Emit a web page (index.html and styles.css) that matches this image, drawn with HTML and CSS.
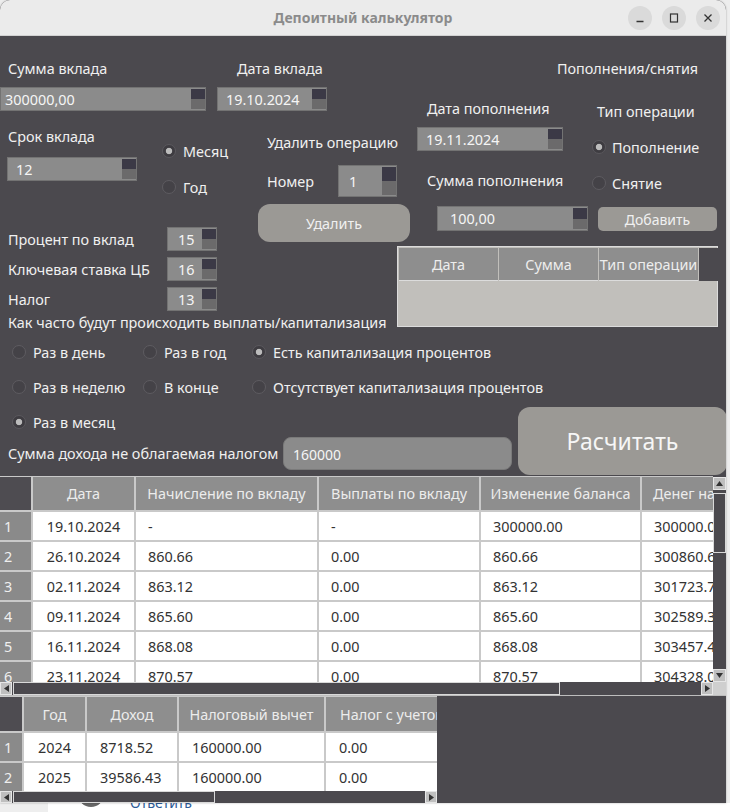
FILE: index.html
```html
<!DOCTYPE html>
<html lang="ru">
<head>
<meta charset="utf-8">
<title>Депоитный калькулятор</title>
<link rel="stylesheet" href="styles.css">
</head>
<body>
<div class="desktop">
  <div class="window">
    <header class="titlebar">
      <span></span>
      <span class="title">Депоитный калькулятор</span>
      <div class="wm-buttons">
        <span class="wm-btn"><svg width="10" height="10" viewBox="0 0 10 10"><path d="M1.5 8.5h7" stroke="#333" stroke-width="1.3"/></svg></span>
        <span class="wm-btn"><svg width="10" height="10" viewBox="0 0 10 10"><rect x="1.5" y="1" width="7" height="8" fill="none" stroke="#333" stroke-width="1.2"/></svg></span>
        <span class="wm-btn"><svg width="10" height="10" viewBox="0 0 10 10"><path d="M1.5 1.5l7 7M8.5 1.5l-7 7" stroke="#333" stroke-width="1.3"/></svg></span>
      </div>
    </header>

    <main class="client">
      <section class="form">
        <div class="top">
          <div class="col col-main">
            <div class="lbl">Сумма вклада</div>
            <div class="spin w-sum pad-s"><span class="val">300000,00</span><span class="arrows"><i></i><i></i></span></div>
            <div class="term">
              <div class="term-left">
                <div class="lbl">Срок вклада</div>
                <div class="spin w-term"><span class="val">12</span><span class="arrows"><i></i><i></i></span></div>
              </div>
              <div class="radios">
                <div class="radio checked"><span class="dot"></span>Месяц</div>
                <div class="radio"><span class="dot"></span>Год</div>
              </div>
            </div>
            <div class="rate-row first"><span class="rate-lbl">Процент по вклад</span><div class="spin w-rate"><span class="val">15</span><span class="arrows"><i></i><i></i></span></div></div>
            <div class="rate-row"><span class="rate-lbl">Ключевая ставка ЦБ</span><div class="spin w-rate"><span class="val">16</span><span class="arrows"><i></i><i></i></span></div></div>
            <div class="rate-row"><span class="rate-lbl">Налог</span><div class="spin w-rate"><span class="val">13</span><span class="arrows"><i></i><i></i></span></div></div>
            <div class="lbl freq">Как часто будут происходить выплаты/капитализация</div>
          </div>

          <div class="col col-del">
            <div class="lbl date-lbl">Дата вклада</div>
            <div class="spin w-date"><span class="val">19.10.2024</span><span class="arrows"><i></i><i></i></span></div>
            <div class="lbl del-lbl">Удалить операцию</div>
            <div class="num-row"><span class="num-lbl">Номер</span><div class="spin w-num"><span class="val">1</span><span class="arrows"><i></i><i></i></span></div></div>
            <button class="btn btn-del">Удалить</button>
          </div>

          <div class="col col-ops">
            <div class="lbl ops-head">Пополнения/снятия</div>
            <div class="ops-row">
              <div class="ops-col3">
                <div class="lbl l-dp">Дата пополнения</div>
                <div class="spin w-dp"><span class="val">19.11.2024</span><span class="arrows"><i></i><i></i></span></div>
                <div class="lbl l-sp">Сумма пополнения</div>
                <div class="spin w-sp"><span class="val">100,00</span><span class="arrows"><i></i><i></i></span></div>
              </div>
              <div class="ops-col4">
                <div class="lbl l-type">Тип операции</div>
                <div class="radio checked r-pop"><span class="dot"></span>Пополнение</div>
                <div class="radio r-sn"><span class="dot"></span>Снятие</div>
                <button class="btn btn-add">Добавить</button>
              </div>
            </div>
            <div class="ops-table">
              <div class="oh">Дата</div>
              <div class="oh">Сумма</div>
              <div class="oh">Тип операции</div>
              <div class="oh-corner"></div>
            </div>
          </div>
        </div>

        <div class="bottom">
          <div class="bottom-left">
            <div class="radio-grid">
              <div class="radio"><span class="dot"></span>Раз в день</div>
              <div class="radio"><span class="dot"></span>Раз в год</div>
              <div class="radio checked"><span class="dot"></span>Есть капитализация процентов</div>
              <div class="radio"><span class="dot"></span>Раз в неделю</div>
              <div class="radio"><span class="dot"></span>В конце</div>
              <div class="radio"><span class="dot"></span>Отсутствует капитализация процентов</div>
              <div class="radio checked"><span class="dot"></span>Раз в месяц</div>
            </div>
            <div class="tax-row">
              <span class="tax-lbl">Сумма дохода не облагаемая налогом</span>
              <div class="tax-input">160000</div>
            </div>
          </div>
          <button class="btn btn-calc">Расчитать</button>
        </div>
      </section>

      <section class="table-widget main-table">
        <div class="viewport">
          <div class="grid mgrid">
            <div class="corner"></div><div class="hd">Дата</div><div class="hd">Начисление по вкладу</div><div class="hd">Выплаты по вкладу</div><div class="hd">Изменение баланса</div><div class="hd left">Денег на счету</div>
            <div class="rn">1</div><div class="c ctr">19.10.2024</div><div class="c">-</div><div class="c">-</div><div class="c">300000.00</div><div class="c">300000.00</div>
            <div class="rn">2</div><div class="c ctr">26.10.2024</div><div class="c">860.66</div><div class="c">0.00</div><div class="c">860.66</div><div class="c">300860.66</div>
            <div class="rn">3</div><div class="c ctr">02.11.2024</div><div class="c">863.12</div><div class="c">0.00</div><div class="c">863.12</div><div class="c">301723.78</div>
            <div class="rn">4</div><div class="c ctr">09.11.2024</div><div class="c">865.60</div><div class="c">0.00</div><div class="c">865.60</div><div class="c">302589.38</div>
            <div class="rn">5</div><div class="c ctr">16.11.2024</div><div class="c">868.08</div><div class="c">0.00</div><div class="c">868.08</div><div class="c">303457.46</div>
            <div class="rn">6</div><div class="c ctr">23.11.2024</div><div class="c">870.57</div><div class="c">0.00</div><div class="c">870.57</div><div class="c">304328.03</div>
          </div>
        </div>
        <div class="vscroll">
          <span class="arrow"><svg width="7" height="5" viewBox="0 0 7 5"><path d="M0 5L3.5 0 7 5z" fill="#333"/></svg></span>
          <span class="vhandle"></span>
          <span class="vtrack"></span>
          <span class="arrow"><svg width="7" height="5" viewBox="0 0 7 5"><path d="M0 0L3.5 5 7 0z" fill="#333"/></svg></span>
        </div>
        <div class="hscroll">
          <span class="arrow"><svg width="5" height="7" viewBox="0 0 5 7"><path d="M5 0L0 3.5 5 7z" fill="#333"/></svg></span>
          <span class="hhandle h-main"></span>
          <span class="htrack"></span>
          <span class="arrow"><svg width="5" height="7" viewBox="0 0 5 7"><path d="M0 0L5 3.5 0 7z" fill="#333"/></svg></span>
        </div>
        <div class="sc-corner"></div>
      </section>

      <section class="tax-table">
        <div class="tax-wrap">
          <div class="viewport2">
            <div class="grid tgrid">
              <div class="corner"></div><div class="hd">Год</div><div class="hd">Доход</div><div class="hd">Налоговый вычет</div><div class="hd left">Налог с учетом вычета</div>
              <div class="rn">1</div><div class="c ctr">2024</div><div class="c">8718.52</div><div class="c">160000.00</div><div class="c">0.00</div>
              <div class="rn">2</div><div class="c ctr">2025</div><div class="c">39586.43</div><div class="c">160000.00</div><div class="c">0.00</div>
            </div>
          </div>
          <div class="hscroll">
            <span class="arrow"><svg width="5" height="7" viewBox="0 0 5 7"><path d="M5 0L0 3.5 5 7z" fill="#333"/></svg></span>
            <span class="hhandle h-tax"></span>
            <span class="htrack"></span>
            <span class="arrow"><svg width="5" height="7" viewBox="0 0 5 7"><path d="M0 0L5 3.5 0 7z" fill="#333"/></svg></span>
          </div>
        </div>
      </section>
    </main>
  </div>
  <div class="behind">
    <span class="behind-side"></span>
    <span class="avatar"></span>
    <span class="reply">Ответить</span>
  </div>
</div>
</body>
</html>
```

FILE: styles.css
```css
* { box-sizing: border-box; }
html, body { margin: 0; padding: 0; }
body {
  width: 730px; height: 812px; overflow: hidden;
  background: #ededed;
  font-family: "Noto Sans", "DejaVu Sans", sans-serif;
  font-size: 14.4px;
  color: #f0f0f0;
}
.desktop { width: 730px; height: 812px; display: flex; flex-direction: column; }

.window {
  width: 726px; height: 803px; flex: none;
  display: flex; flex-direction: column;
  background: #4b494e;
  border-radius: 10px 10px 0 0;
  overflow: hidden;
  position: relative; z-index: 1;
  box-shadow: 0 0 2px rgba(0,0,0,0.35);
}

/* title bar */
.titlebar {
  height: 36px; flex: none;
  background: #ebebeb;
  border-bottom: 1px solid #d2d2d2;
  display: grid; grid-template-columns: 1fr auto 1fr; align-items: center;
}
.title { font-weight: bold; font-size: 14px; color: #8b8b8b; }
.wm-buttons { justify-self: end; display: flex; gap: 10px; padding-right: 6px; }
.wm-btn {
  width: 24px; height: 24px; border-radius: 50%;
  background: #dadada;
  display: flex; align-items: center; justify-content: center;
}

.client { flex: 1; display: flex; flex-direction: column; }

/* form */
.form { height: 440px; flex: none; padding-top: 24px; }
.top { display: flex; align-items: flex-start; }
.col { display: flex; flex-direction: column; }
.col-main { width: 217px; flex: none; }
.col-del { width: 180px; flex: none; }
.col-ops { width: 329px; flex: none; }

.lbl { height: 18px; line-height: 18px; white-space: nowrap; color: #f0f0f0; padding-left: 8px; }

.spin {
  display: flex; height: 24px;
  background: #8b8b8b;
  border: 1px solid #737373;
  color: #f5f5f5;
}
.spin .val { flex: 1; display: flex; align-items: center; padding-left: 8px; white-space: nowrap; overflow: hidden; }
.spin.pad-s .val { padding-left: 4px; }
.arrows { width: 14px; flex: none; display: flex; flex-direction: column; padding: 1px 0 1px 0; }
.arrows i { flex: 1; display: block; }
.arrows i:first-child { background: #3b3946; }
.arrows i:last-child { background: #6b6a6b; }

.w-sum { width: 206px; margin-top: 9px; }
.term { display: flex; margin-top: 17px; }
.term-left { width: 162px; flex: none; }
.w-term { width: 130px; margin-top: 11px; margin-left: 7px; }
.radios { display: flex; flex-direction: column; gap: 16px; margin-top: 13px; }

.radio { display: flex; align-items: center; gap: 7px; height: 20px; white-space: nowrap; color: #f0f0f0; }
.radio .dot {
  width: 14px; height: 14px; flex: none; border-radius: 50%;
  border: 1px solid #5e5c61;
  background: #444247;
}
.radio.checked .dot { background: radial-gradient(circle, #bcbcbc 0 2.8px, #3e3c41 3.6px); border-color: #5a585d; }

.rate-row { display: flex; align-items: center; height: 24px; margin-top: 6px; }
.rate-row.first { margin-top: 30px; }
.rate-lbl { width: 167px; flex: none; padding-left: 8px; white-space: nowrap; }
.w-rate { width: 61px; }
.w-rate .val { padding-left: 10px; }
.freq { margin-top: 3px; }

.date-lbl { padding-left: 20px; }
.w-date { width: 110px; margin-top: 9px; }
.del-lbl { padding-left: 50px; margin-top: 23px; }
.num-row { display: flex; align-items: center; height: 32px; margin-top: 13px; margin-left: 50px; }
.num-lbl { width: 71px; flex: none; }
.w-num { width: 72px; height: 32px; }
.w-num .val { padding-left: 10px; }

.btn {
  font-family: inherit; font-size: 14.4px; color: #f0f0f0;
  background: #9b9995; border: none; padding: 0;
  display: flex; align-items: center; justify-content: center;
}
.btn-del { width: 152px; height: 38px; border-radius: 12px; margin-top: 7px; margin-left: 41px; }

.ops-head { padding-left: 160px; }
.ops-row { display: flex; }
.ops-col3 { width: 200px; flex: none; display: flex; flex-direction: column; }
.ops-col4 { flex: 1; display: flex; flex-direction: column; }
.l-dp { padding-left: 30px; margin-top: 22px; }
.w-dp { width: 146px; margin-top: 9px; margin-left: 20px; }
.l-sp { padding-left: 30px; margin-top: 21px; }
.w-sp { width: 151px; height: 25px; margin-top: 16px; margin-left: 40px; }
.w-sp .val { padding-left: 12px; }
.l-type { padding-left: 0; margin-top: 25px; }
.r-pop { margin-top: 16px; margin-left: -5px; gap: 6px; }
.r-sn { margin-top: 16px; margin-left: -5px; gap: 6px; }
.btn-add { width: 119px; height: 24px; border-radius: 5px; margin-top: 14px; margin-left: 1px; font-size: 14px; }

.ops-table {
  width: 321px; height: 81px; margin-top: 15px;
  background: #c1bfbb;
  border: 1px solid #dcdcdc;
  padding: 1px;
  display: grid; grid-template-columns: 99px 99px 99px 19px; column-gap: 1px;
  grid-template-rows: 33px; align-content: start;
}
.oh {
  background: #8e8e8e; color: #ededed;
  display: flex; align-items: center; justify-content: center;
  white-space: nowrap; overflow: hidden;
  border-bottom: 1px solid #dcdcdc;
}
.oh-corner { background: #4b494e; }

/* bottom area */
.bottom { display: flex; margin-top: 10px; }
.bottom-left { width: 518px; flex: none; }
.radio-grid {
  display: grid; grid-template-columns: 131px 109px auto;
  grid-auto-rows: 20px; row-gap: 15px; padding-left: 12px;
}
.tax-row { display: flex; align-items: center; margin-top: 5px; }
.tax-lbl { width: 283px; flex: none; padding-left: 8px; white-space: nowrap; }
.tax-input {
  width: 229px; height: 33px; border-radius: 8px;
  background: #8b8b8b; border: 1px solid #7a7a7a;
  color: #f5f5f5; font-size: 14px;
  display: flex; align-items: center; padding: 2px 0 0 9px;
}
.btn-calc {
  width: 209px; height: 68px; flex: none; border-radius: 12px;
  margin-top: 65px; font-size: 23px; color: #f6f6f6;
}

/* tables */
.table-widget {
  height: 219px; flex: none;
  display: grid; grid-template-columns: 713px 13px; grid-template-rows: 206px 13px;
}
.viewport, .viewport2 { overflow: hidden; background: #c9c9c9; }
.grid { display: grid; gap: 2px; padding-top: 1px; }
.mgrid {
  grid-template-columns: 31px 101px 181px 160px 159px 140px;
  grid-template-rows: 33px repeat(6, 28px);
}
.corner { background: #4e4c51; }
.hd {
  background: #8e8e8e; color: #ececec;
  display: flex; align-items: center; justify-content: center;
  white-space: nowrap; overflow: hidden;
}
.hd.left { justify-content: flex-start; padding-left: 11px; }
.rn { background: #8a8a8a; color: #efefef; display: flex; align-items: center; padding-left: 4px; }
.c { background: #ffffff; color: #333333; display: flex; align-items: center; padding-left: 12px; white-space: nowrap; overflow: hidden; }
.c.ctr { justify-content: center; padding-left: 0; }

.vscroll { display: flex; flex-direction: column; background: #4b494e; padding: 1px 0 0 0; }
.arrow {
  width: 13px; height: 13px; flex: none;
  background: #bfbfbf; border: 1px solid #e6e6e6;
  display: flex; align-items: center; justify-content: center;
}
.vhandle { height: 60px; flex: none; margin-top: 3px; border: 1px solid #d9d9d9; background: #4b494e; }
.vtrack { flex: 1; }
.hscroll { display: flex; background: #4b494e; }
.hscroll .arrow { width: 12px; }
.hhandle { flex: none; margin-left: 1px; border: 1px solid #d9d9d9; background: #4b494e; }
.h-main { width: 547px; }
.h-tax { width: 202px; }
.htrack { flex: 1; }
.sc-corner { background: #cfcfcf; }

.tax-table { flex: 1; background: #4b494e; border-top: 1px solid #bdbdbd; }
.tax-wrap { width: 437px; height: 100%; display: flex; flex-direction: column; }
.viewport2 { flex: 1; }
.tgrid {
  grid-template-columns: 22px 61px 90px 145px 140px;
  grid-template-rows: 34px 28px 28px;
}
.tgrid .c { padding-left: 13px; }
.tgrid .c.ctr { padding-left: 0; }
.tgrid .hd.left { padding-left: 14px; }
.tax-wrap .hscroll { height: 12px; flex: none; }
.tax-wrap .hscroll .arrow { height: 12px; }

/* what lies behind the window */
.behind { flex: 1; display: flex; background: #ffffff; overflow: hidden; }
.behind-side { width: 48px; flex: none; background: #eeeeee; }
.avatar { width: 26px; height: 26px; border-radius: 50%; background: #666; margin: -22px 0 0 30px; flex: none; }
.reply { margin: -9px 0 0 26px; font-size: 14px; color: #2d5c98; line-height: 18px; }
```
